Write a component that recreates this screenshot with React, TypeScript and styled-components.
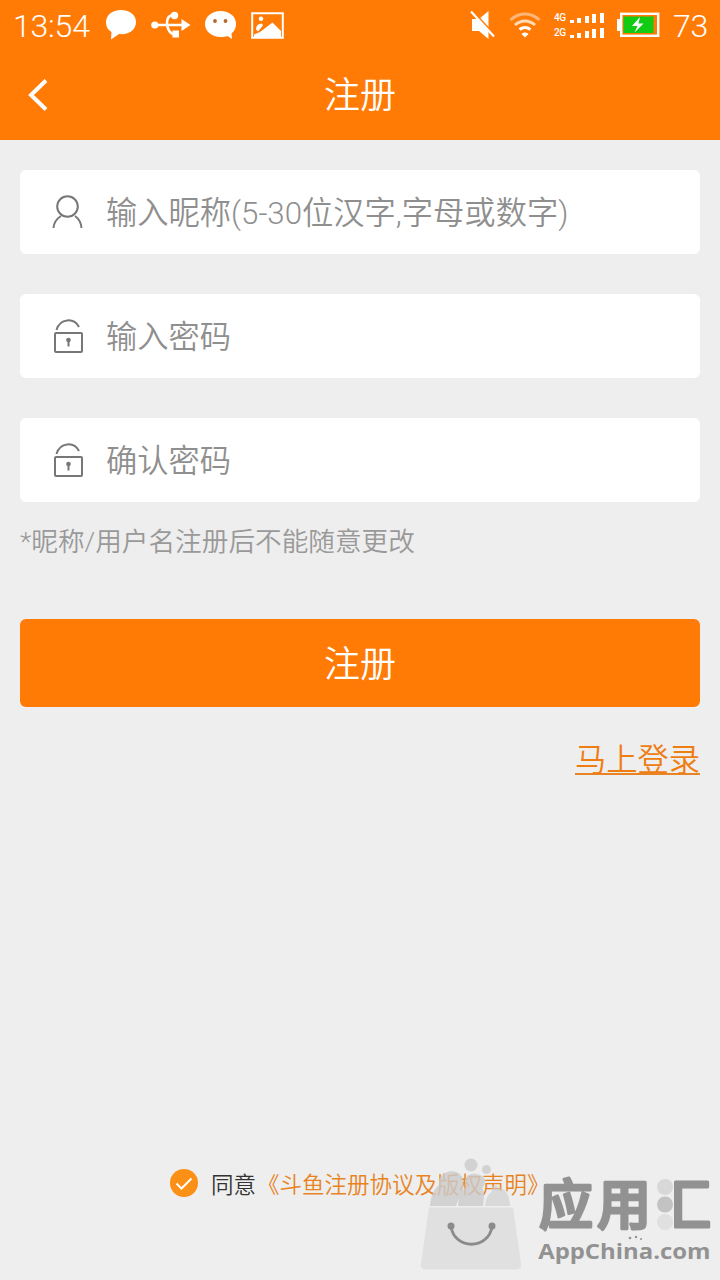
import React from 'react';
import styled, { createGlobalStyle } from 'styled-components';

const GlobalStyle = createGlobalStyle`
  * { box-sizing: border-box; }
  body {
    margin: 0;
    background: #eeeeee;
    font-family: Roboto, "Noto Sans CJK SC", sans-serif;
    font-weight: 350;
  }
  svg { display: block; flex: none; }
`;

const Screen = styled.div`
  position: relative;
  display: flex;
  flex-direction: column;
  width: 720px;
  height: 1280px;
  overflow: hidden;
  background: #eeeeee;
`;

const Top = styled.header`
  height: 140px;
  background: #ff7b06;
  color: #fff;
`;

const StatusBar = styled.div`
  display: flex;
  align-items: center;
  justify-content: space-between;
  height: 50px;
  padding: 0 11px 0 13px;
`;

const StatusText = styled.span<{ $width: number }>`
  width: ${(p) => p.$width}px;
  font-size: 32px;
  font-weight: 300;
  line-height: 50px;
  padding-top: 2px;
  letter-spacing: -0.2px;
  white-space: nowrap;
`;

const StatusGroup = styled.div<{ $gap: number }>`
  display: flex;
  align-items: center;
  gap: ${(p) => p.$gap}px;
`;

const TitleBar = styled.div`
  display: grid;
  grid-template-columns: 80px 1fr 80px;
  align-items: center;
  height: 90px;
`;

const BackButton = styled.button`
  display: flex;
  padding: 0 0 0 26px;
  border: 0;
  background: none;
  color: #fff;
`;

const Title = styled.h1`
  margin: 0;
  padding-top: 3px;
  font-size: 36px;
  font-weight: 350;
  line-height: 87px;
  text-align: center;
`;

const Form = styled.main`
  display: flex;
  flex-direction: column;
  padding: 30px 20px 0;
`;

const Fields = styled.div`
  display: flex;
  flex-direction: column;
  gap: 40px;
`;

const Field = styled.label`
  display: flex;
  align-items: center;
  gap: 22px;
  height: 84px;
  padding-left: 31px;
  border-radius: 6px;
  background: #fff;
  color: #8f8f8f;
  font-size: 31.27px;
  white-space: nowrap;
`;

const Placeholder = styled.span`
  padding-top: 4px;
  line-height: 80px;
`;

const Hint = styled.p`
  margin: 20px 0 0;
  color: #999;
  font-size: 26.65px;
  line-height: 40px;
`;

const Submit = styled.button`
  height: 88px;
  margin-top: 57px;
  padding: 5px 0 0;
  border: 0;
  border-radius: 6px;
  background: #ff7b06;
  color: #fff;
  font: inherit;
  font-size: 36px;
  line-height: 83px;
`;

const LoginLink = styled.a`
  align-self: flex-end;
  height: 39px;
  margin-top: 29px;
  padding-top: 7px;
  border-bottom: 2px solid #e88424;
  color: #ee7d12;
  font-size: 31.27px;
  line-height: 36px;
`;

const Agreement = styled.div`
  display: flex;
  align-items: center;
  height: 40px;
  margin-top: auto;
  margin-bottom: 77px;
  padding-left: 169px;
  font-size: 22.5px;
  line-height: 36px;
  white-space: nowrap;
`;

const Agree = styled.span`
  margin-left: 12px;
  padding-top: 4px;
  color: #333;
`;

const Terms = styled.span`
  margin-left: 1px;
  padding-top: 4px;
  color: #e8841f;
`;

const Watermark = styled.div`
  position: absolute;
  left: 420px;
  top: 1156px;
  display: flex;
  width: 300px;
  height: 124px;
`;

const Brand = styled.div`
  display: flex;
  flex-direction: column;
  margin-left: 14px;
  color: #929292;
`;

const BrandName = styled.svg`
  margin-bottom: -11px;
  font-family: "Noto Sans CJK SC", sans-serif;
  font-size: 54px;
  font-weight: 500;
  fill: #929292;
  stroke: #929292;
  stroke-width: 3px;
  stroke-linejoin: round;
`;

const BrandUrl = styled.div`
  padding-left: 2px;
  transform: scaleX(1.085);
  transform-origin: 0 50%;
  font-family: "Open Sans", sans-serif;
  font-size: 22px;
  font-weight: 700;
  line-height: 30px;
`;

const ChatIcon = () => (
  <svg width="32" height="32" viewBox="0 0 32 32" fill="#fff">
    <path d="M16 1C7 1 1 6 1 13.500c0 4.500 2 7.500 5.500 9.500L6 30.500l8-5.500c10 1 17-4 17-12C31 6 25 1 16 1z" />
  </svg>
);

const UsbIcon = () => (
  <svg width="40" height="28" viewBox="0 0 40 28" fill="none" stroke="#fff" strokeWidth="2.600">
    <path d="M4 14h29M24 4.500h-3c-8 0-6 19 3 19" />
    <circle cx="3.800" cy="14" r="3.600" fill="#fff" stroke="none" />
    <circle cx="23.500" cy="4.500" r="3.700" fill="#fff" stroke="none" />
    <path d="M21.500 19.500h6.500v7h-6.500zM30.500 8l9 6-9 6z" fill="#fff" stroke="none" />
  </svg>
);

const WechatIcon = () => (
  <svg width="32" height="30" viewBox="0 0 32 30">
    <path d="M15.500 1C7 1 0 6.500 0 14S7 27 15.500 27c3 0 5-.3 7-1l4.500 3-.5-5.500c3-2.500 4.500-5.500 4.500-9.500C31 6.500 24.500 1 15.500 1z" fill="#fff" />
    <circle cx="10" cy="11" r="1.900" fill="#b9652c" />
    <circle cx="20.500" cy="11" r="1.900" fill="#b9652c" />
  </svg>
);

const PhotoIcon = () => (
  <svg width="33" height="27" viewBox="0 0 33 27" fill="#fff">
    <path d="M1.200 1.200h30.600v24.600H1.200z" fill="none" stroke="#fff" strokeWidth="2" />
    <circle cx="10" cy="6.800" r="2.300" />
    <path d="M5 17.500q0-6 6-6l1 2-5 6zM3 22.500l6-2.500 12.500-9.500L30 19v6H3z" />
  </svg>
);

const MuteIcon = () => (
  <svg width="26" height="30" viewBox="0 0 26 30">
    <path d="M2 9h7l9.500-8v28L9 21H2z" fill="#fff" />
    <path d="M2.500 1l23 25" stroke="#ff7b06" strokeWidth="2" />
    <path d="M1 1.500l23 25" stroke="#fff" strokeWidth="2.200" />
  </svg>
);

const WifiIcon = () => (
  <svg width="32" height="26" viewBox="0 0 32 26" fill="none" strokeWidth="3">
    <path d="M1.500 8C10 0 22 0 30.500 8" stroke="#ffb67a" />
    <path d="M6 13c6-5.500 14-5.500 20 0" stroke="#ffdcb8" />
    <path d="M10.500 17.500c3.500-2.500 7.500-2.500 11 0" stroke="#fff" />
    <path d="M12.500 22c2-2 5-2 7 0L16 25.500z" fill="#fff" />
  </svg>
);

const SignalRow = styled.div`
  display: flex;
  align-items: flex-end;
  gap: 3.5px;
  height: 11px;
`;

const SignalLabel = styled.span`
  width: 12px;
  font-size: 10px;
  font-weight: 500;
  line-height: 11px;
  letter-spacing: -0.5px;
`;

const SignalBar = styled.i<{ $height: number }>`
  width: 4px;
  height: ${(p) => p.$height}px;
  background: #fff;
`;

const Signals = styled.div`
  display: flex;
  flex-direction: column;
  gap: 4px;
  width: 50px;
`;

const BatteryIcon = () => (
  <svg width="43" height="26" viewBox="0 0 43 26">
    <path d="M0 7h4v12H0z" fill="#fff" />
    <rect x="4.200" y="1.800" width="37" height="22" fill="#ff7b06" stroke="#fff" strokeWidth="2.400" />
    <rect x="6.500" y="4.500" width="30" height="16.500" fill="#12cb12" />
    <path d="M23 5l-8 9h5.500L17.500 20.500l9-9h-5z" fill="#fff" />
  </svg>
);

const BackIcon = () => (
  <svg width="24" height="34" viewBox="0 0 24 34" fill="none" stroke="#fff" strokeWidth="4">
    <path d="M20 2.500L5 17l15 14.500" />
  </svg>
);

const UserIcon = () => (
  <svg width="33" height="36" viewBox="0 0 33 36" fill="none" stroke="#777" strokeWidth="2">
    <circle cx="16.500" cy="12.500" r="10.300" />
    <path d="M2.500 34c.5-6 3.500-9.500 7.500-12M30.500 34c-.5-6-3-9.500-6.500-12" />
  </svg>
);

const LockIcon = () => (
  <svg width="33" height="36" viewBox="0 0 33 36" fill="none" stroke="#777" strokeWidth="2">
    <rect x="4" y="15" width="27" height="19" rx="1" />
    <path d="M5.500 12C9 0 23-.5 28 9" />
    <circle cx="17.500" cy="22" r="2.300" fill="#777" stroke="none" />
    <path d="M17.500 22.500v6" strokeWidth="2" />
  </svg>
);

const CheckIcon = () => (
  <svg width="30" height="30" viewBox="0 0 30 30" fill="none">
    <circle cx="15" cy="15" r="14" fill="#fa9015" />
    <path d="M7.500 15.500l5 5 10-10" stroke="#fff" strokeWidth="2" />
  </svg>
);

const BagIcon = () => (
  <svg width="102" height="124" viewBox="0 0 102 124">
    <g fill="#cbcbcb" fillOpacity=".8">
      <path d="M10 50C11 39 14 33 19 29c-2-15 21-19 24-5 2 11-4 16-7 26z" />
      <circle cx="51" cy="9" r="6.500" />
      <circle cx="66.500" cy="13.500" r="4.500" />
      <path d="M38 50c1-11 3-16 8-19-4-9 2-14 10-13 9 1 12 8 6 14 3 4 2 9 1 18z" />
      <path d="M65 50c1-8 3-12 7-14-2-7 4-9 7-4 6-1 11 8 11 18z" fillOpacity=".6" />
    </g>
    <path d="M9 51.500h84l8 56q1 6-5 6H6q-6 0-5-6z" fill="#dedede" fillOpacity=".95" />
    <path d="M31 71c4 23 37 23 41 0" fill="none" stroke="#8b8b8b" strokeWidth="2.800" />
    <circle cx="31" cy="70" r="3.500" fill="#8b8b8b" />
    <circle cx="72" cy="70" r="3.500" fill="#8b8b8b" />
  </svg>
);

const Signal = ({ label }: { label: string }) => (
  <SignalRow>
    <SignalLabel>{label}</SignalLabel>
    {[3, 5, 7, 9, 10].map((h) => (
      <SignalBar key={h} $height={h} />
    ))}
  </SignalRow>
);

export default function App() {
  return (
    <Screen>
      <GlobalStyle />
      <Top>
        <StatusBar>
          <StatusGroup $gap={14}>
            <StatusText $width={78}>13:54</StatusText>
            <ChatIcon />
            <UsbIcon />
            <WechatIcon />
            <PhotoIcon />
          </StatusGroup>
          <StatusGroup $gap={13}>
            <MuteIcon />
            <WifiIcon />
            <Signals>
              <Signal label="4G" />
              <Signal label="2G" />
            </Signals>
            <BatteryIcon />
            <StatusText $width={36}>73</StatusText>
          </StatusGroup>
        </StatusBar>
        <TitleBar>
          <BackButton aria-label="返回"><BackIcon /></BackButton>
          <Title>注册</Title>
        </TitleBar>
      </Top>
      <Form>
        <Fields>
          <Field><UserIcon /><Placeholder>输入昵称(5-30位汉字,字母或数字)</Placeholder></Field>
          <Field><LockIcon /><Placeholder>输入密码</Placeholder></Field>
          <Field><LockIcon /><Placeholder>确认密码</Placeholder></Field>
        </Fields>
        <Hint>*昵称/用户名注册后不能随意更改</Hint>
        <Submit>注册</Submit>
        <LoginLink>马上登录</LoginLink>
      </Form>
      <Agreement>
        <CheckIcon />
        <Agree>同意</Agree>
        <Terms>《斗鱼注册协议及版权声明》</Terms>
      </Agreement>
      <Watermark>
        <BagIcon />
        <Brand>
          <BrandName width="184" height="90" viewBox="0 0 184 90">
            <defs>
              <clipPath id="brand-right">
                <path d="M138 0h46v90h-46z" />
              </clipPath>
            </defs>
            <text x="3" y="69">应</text>
            <text x="61" y="69">用</text>
            <text x="121" y="69" clipPath="url(#brand-right)">汇</text>
            <g stroke="none">
              <circle cx="129" cy="31" r="8" fill="#d8d8d8" />
              <circle cx="129" cy="48.500" r="8" fill="#c2c2c2" />
              <circle cx="129" cy="66" r="8" fill="#e0e0e0" />
              <circle cx="94" cy="82" r="1.300" />
              <circle cx="100" cy="81" r="1.200" />
              <circle cx="105" cy="83" r="1" />
            </g>
          </BrandName>
          <BrandUrl>AppChina.com</BrandUrl>
        </Brand>
      </Watermark>
    </Screen>
  );
}
